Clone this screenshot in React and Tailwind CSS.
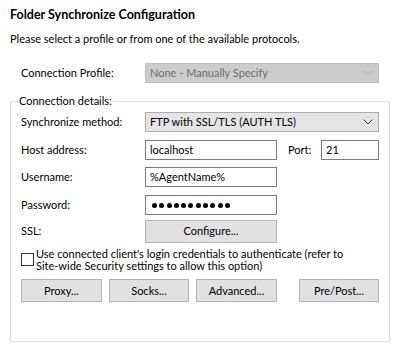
import React from "react";

const font = { fontFamily: 'Lato, "Noto Sans", sans-serif' };

function Chevron({ color }) {
  return (
    <svg width="10" height="6" viewBox="0 0 10 6" className="shrink-0">
      <path d="M0.5 0.5 L5 5 L9.5 0.5" fill="none" stroke={color} strokeWidth="1" />
    </svg>
  );
}

function Btn({ children, className = "" }) {
  return (
    <div className={"flex items-center justify-center h-[23px] bg-[#e1e1e1] border border-[#a9b3c1] text-black " + className}>
      {children}
    </div>
  );
}

function Input({ children, className = "" }) {
  return (
    <div className={"flex items-center h-[20px] border border-[#7a7a7a] bg-white pl-[4px] " + className}>
      {children}
    </div>
  );
}

export default function App() {
  return (
    <div className="w-[399px] h-[350px] bg-white text-black text-[11px] leading-[16px] relative overflow-hidden" style={font}>
      <div className="pl-[10px] pt-[7px] font-bold text-[12.5px]">Folder Synchronize Configuration</div>
      <div className="pl-[10px] mt-[8px]">Please select a profile or from one of the available protocols.</div>

      <div className="flex items-center mt-[16px] h-[20px]">
        <div className="pl-[21px] w-[145px]">Connection Profile:</div>
        <div className="flex items-center justify-between w-[234px] h-[20px] bg-[#cccccc] border border-[#bfbfbf] text-[#6d6d6d] pl-[4px] pr-[5px]">
          <span>None - Manually Specify</span>
          <Chevron color="#b5b5b5" />
        </div>
      </div>

      <fieldset className="ml-[10px] mt-[11px] w-[380px] h-[248px] border border-[#dcdcdc] relative">
        <legend className="ml-[7px] px-[1px] leading-[14px]">Connection details:</legend>
        <div className="flex flex-col">
          <div className="flex items-center mt-[4px] h-[20px]">
            <div className="pl-[10px] w-[134px]">Synchronize method:</div>
            <div className="flex items-center justify-between w-[234px] h-[20px] bg-[#e5e5e5] border border-[#acacac] pl-[4px] pr-[5px]">
              <span>FTP with SSL/TLS (AUTH TLS)</span>
              <Chevron color="#333333" />
            </div>
          </div>

          <div className="flex items-center mt-[8px] h-[20px]">
            <div className="pl-[10px] w-[134px]">Host address:</div>
            <Input className="w-[132px]">localhost</Input>
            <div className="ml-[11px] w-[33px]">Port:</div>
            <Input className="w-[58px]">21</Input>
          </div>

          <div className="flex items-center mt-[7px] h-[20px]">
            <div className="pl-[10px] w-[134px]">Username:</div>
            <Input className="w-[132px]">%AgentName%</Input>
          </div>

          <div className="flex items-center mt-[8px] h-[20px]">
            <div className="pl-[10px] w-[134px]">Password:</div>
            <Input className="w-[132px] gap-[2.3px] pl-[6px]">
              {Array.from({ length: 11 }).map((_, i) => (
                <div key={i} className="w-[5px] h-[5px] rounded-full bg-black" />
              ))}
            </Input>
          </div>

          <div className="flex items-center mt-[6px] h-[20px]">
            <div className="pl-[10px] w-[134px]">SSL:</div>
            <Btn className="w-[132px] h-[20px]">Configure...</Btn>
          </div>

          <div className="flex mt-[7px] pl-[10px]">
            <div className="w-[13px] h-[13px] border border-[#333333] bg-white mt-[5px] shrink-0" />
            <div className="ml-[2px] leading-[12px] whitespace-nowrap">
              Use connected client's login credentials to authenticate (refer to
              <br />
              Site-wide Security settings to allow this option)
            </div>
          </div>

          <div className="flex mt-[7px] pl-[10px]">
            <Btn className="w-[81px]">Proxy...</Btn>
            <Btn className="w-[80px] ml-[7px]">Socks...</Btn>
            <Btn className="w-[81px] ml-[7px]">Advanced...</Btn>
            <Btn className="w-[80px] ml-[22px]">Pre/Post...</Btn>
          </div>
        </div>
      </fieldset>
    </div>
  );
}
